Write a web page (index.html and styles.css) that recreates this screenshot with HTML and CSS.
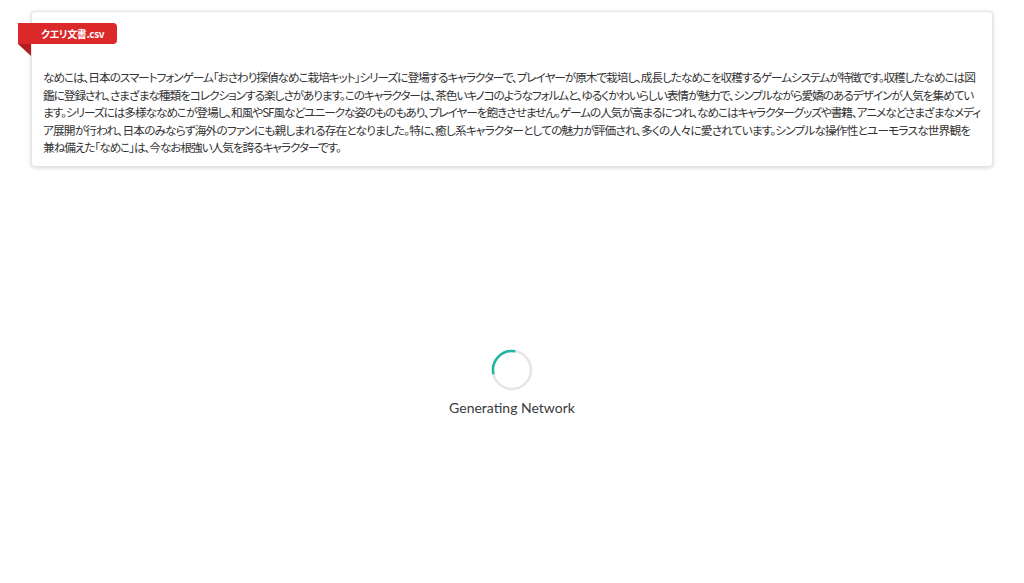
FILE: index.html
```html
<!DOCTYPE html>
<html lang="ja">
<head>
<meta charset="utf-8">
<title>Generating Network</title>
<link rel="stylesheet" href="styles.css">
</head>
<body>
<div class="page">
  <div class="segment">
    <div class="ribbon">クエリ文書.csv</div>
    <p class="doc">なめこは、日本のスマートフォンゲーム「おさわり探偵なめこ栽培キット」シリーズに登場するキャラクターで、プレイヤーが原木で栽培し、成長したなめこを収穫するゲームシステムが特徴です。収穫したなめこは図<br>鑑に登録され、さまざまな種類をコレクションする楽しさがあります。このキャラクターは、茶色いキノコのようなフォルムと、ゆるくかわいらしい表情が魅力で、シンプルながら愛嬌のあるデザインが人気を集めてい<br>ます。シリーズには多様ななめこが登場し、和風やSF風などユニークな姿のものもあり、プレイヤーを飽きさせません。ゲームの人気が高まるにつれ、なめこはキャラクターグッズや書籍、アニメなどさまざまなメディ<br><span class="wide">ア展開が行われ、日本のみならず海外のファンにも親しまれる存在となりました。特に、癒し系キャラクターとしての魅力が評価され、多くの人々に愛されています。シンプルな操作性とユーモラスな世界観を</span><br>兼ね備えた「なめこ」は、今なお根強い人気を誇るキャラクターです。</p>
  </div>
  <div class="loader">
    <svg class="spinner" width="42" height="42" viewBox="0 0 42 42">
      <circle cx="21" cy="21" r="19" fill="none" stroke="#e6e6e6" stroke-width="2.5"/>
      <path d="M2.5 25.3 A19 19 0 0 1 24.3 2.3" fill="none" stroke="#1fb5a3" stroke-width="2.5"/>
    </svg>
    <div class="loader-text">Generating Network</div>
  </div>
</div>
</body>
</html>
```

FILE: styles.css
```css
html, body {
  margin: 0;
  padding: 0;
  background: #ffffff;
}

.page {
  padding: 11px 31px 0 31px;
  font-family: "Noto Sans CJK JP", "Noto Sans", sans-serif;
}

.segment {
  background: #ffffff;
  border: 1px solid rgba(34, 36, 38, 0.12);
  border-radius: 4px;
  box-shadow: 0 1px 4px rgba(34, 36, 38, 0.18);
  padding: 11px 11px 10px 11px;
}

.ribbon {
  position: relative;
  left: -25px;
  display: flex;
  align-items: center;
  width: max-content;
  height: 21px;
  padding: 0 13px 0 23px;
  background: #db2828;
  color: #ffffff;
  font-family: "Noto Sans CJK JP", "Lato", sans-serif;
  font-weight: 700;
  font-size: 10px;
  letter-spacing: -0.35px;
  font-feature-settings: "palt";
  border-radius: 0 4px 4px 0;
}

.ribbon::after {
  content: "";
  position: absolute;
  top: 100%;
  left: 0;
  border-style: solid;
  border-width: 0 13px 12px 0;
  border-color: transparent #b21e1e transparent transparent;
}

.doc {
  margin: 24px 0 0 0;
  font-size: 11.7px;
  letter-spacing: -1.08px;
  line-height: 17.5px;
  color: #333333;
  font-feature-settings: "palt";
  white-space: nowrap;
}

.doc .wide {
  letter-spacing: -0.85px;
}

.loader {
  display: flex;
  flex-direction: column;
  align-items: center;
  margin-top: 182px;
}

.spinner {
  display: block;
}

.loader-text {
  margin-top: 8px;
  font-family: "Lato", sans-serif;
  font-size: 14px;
  line-height: 17px;
  color: #3a3a3a;
}
```
